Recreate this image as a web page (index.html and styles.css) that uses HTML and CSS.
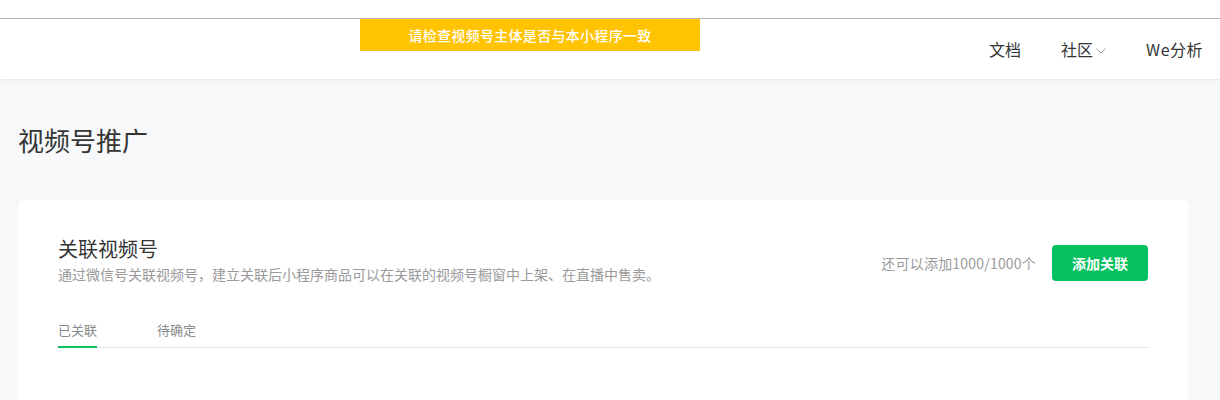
FILE: index.html
```html
<!DOCTYPE html>
<html lang="zh-CN">
<head>
<meta charset="utf-8">
<title>视频号推广</title>
<link rel="stylesheet" href="styles.css">
</head>
<body>
<div class="topbar"></div>
<header class="header">
  <div class="notice">请检查视频号主体是否与本小程序一致</div>
  <nav class="nav">
    <a class="nav-item">文档</a>
    <a class="nav-item">社区<svg class="chev" width="10" height="6" viewBox="0 0 10 6"><polyline points="0.5,0.5 5,5 9.5,0.5" fill="none" stroke="#9a9a9a" stroke-width="1"/></svg></a>
    <a class="nav-item">We分析</a>
  </nav>
</header>
<main class="main">
  <h1 class="page-title">视频号推广</h1>
  <section class="card">
    <div class="card-head">
      <div class="card-info">
        <h2 class="card-title">关联视频号</h2>
        <p class="card-desc">通过微信号关联视频号，建立关联后小程序商品可以在关联的视频号橱窗中上架、在直播中售卖。</p>
      </div>
      <div class="card-actions">
        <span class="quota">还可以添加1000/1000个</span>
        <button class="btn-primary">添加关联</button>
      </div>
    </div>
    <div class="tabs">
      <span class="tab active">已关联</span>
      <span class="tab">待确定</span>
    </div>
  </section>
</main>
</body>
</html>
```
FILE: styles.css
```css
* { box-sizing: border-box; }
html, body { margin: 0; padding: 0; }
body {
  background: #f7f8fa;
  font-family: "Noto Sans CJK SC", "Noto Sans", sans-serif;
  color: #353535;
  overflow: hidden;
}
.topbar {
  height: 19px;
  background: #fff;
  border-bottom: 1px solid #b4b4b4;
}
.header {
  height: 60px;
  background: #fff;
  display: flex;
  align-items: center;
  padding-left: 360px;
  padding-right: 17px;
  box-shadow: 0 1px 2px rgba(0,0,0,0.08);
  position: relative;
  z-index: 1;
}
.notice {
  align-self: flex-start;
  width: 340px;
  height: 32px;
  background: #ffc300;
  color: #fff;
  font-size: 14px;
  font-weight: 500;
  line-height: 32px;
  text-align: center;
  letter-spacing: 0.3px;
}
.nav {
  margin-left: auto;
  display: flex;
  align-items: center;
}
.nav-item {
  font-size: 16px;
  line-height: 24px;
  color: #353535;
  display: flex;
  align-items: center;
}
.nav-item + .nav-item { margin-left: 40px; }
.nav-item:last-child { letter-spacing: 0.5px; }
.chev { margin-left: 3px; margin-top: 3px; }
.main {
  padding: 0 32px 0 18px;
}
.page-title {
  margin: 43px 0 0;
  font-size: 26px;
  font-weight: 400;
  line-height: 36px;
  color: #353535;
}
.card {
  margin-top: 42px;
  background: #fff;
  border-radius: 6px;
  padding: 35px 40px 0;
  min-height: 300px;
}
.card-head {
  display: flex;
  justify-content: space-between;
  align-items: flex-start;
}
.card-title {
  margin: 0;
  font-size: 20px;
  font-weight: 400;
  line-height: 28px;
  color: #353535;
}
.card-desc {
  margin: 1px 0 0;
  font-size: 14px;
  line-height: 20px;
  color: #9a9a9a;
}
.card-actions {
  margin-top: 10px;
  display: flex;
  align-items: center;
  gap: 16px;
}
.quota {
  font-size: 14px;
  color: #9a9a9a;
  letter-spacing: 0.2px;
}
.btn-primary {
  width: 96px;
  height: 36px;
  border: 0;
  border-radius: 4px;
  background: #07c160;
  color: #fff;
  font-family: inherit;
  font-size: 14px;
  font-weight: 700;
  cursor: pointer;
}
.tabs {
  margin-top: 36px;
  display: flex;
  gap: 60px;
  border-bottom: 1px solid #e5e5e5;
}
.tab {
  font-size: 13px;
  line-height: 20px;
  padding-bottom: 6px;
  color: #8a8a8a;
  border-bottom: 2px solid transparent;
  margin-bottom: -1px;
}
.tab.active {
  border-bottom-color: #07c160;
}
```
